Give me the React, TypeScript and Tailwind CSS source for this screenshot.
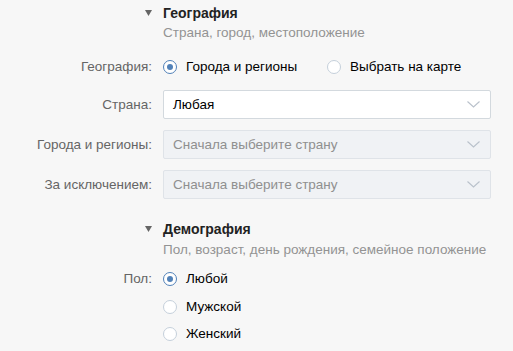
import React from "react";

const Tri = () => (
  <svg width="7" height="6" viewBox="0 0 7 6" className="block">
    <path d="M0 0 H7 L3.5 6 Z" fill="#656565" />
  </svg>
);

const Chevron = () => (
  <svg width="13" height="7" viewBox="0 0 13 7" className="block">
    <path d="M0.5 0.5 L6.5 6 L12.5 0.5" fill="none" stroke="#b9c1cb" strokeWidth="1.1" />
  </svg>
);

const Radio = ({ checked }: { checked?: boolean }) => (
  <span
    className={
      checked
        ? "flex h-[14px] w-[14px] shrink-0 items-center justify-center rounded-full border border-[#5181b8] bg-white"
        : "flex h-[14px] w-[14px] shrink-0 items-center justify-center rounded-full border border-[#c5d0db] bg-white"
    }
  >
    {checked && <span className="h-[6px] w-[6px] rounded-full bg-[#5181b8]" />}
  </span>
);

const Select = ({ text, disabled }: { text: string; disabled?: boolean }) => (
  <div
    className={
      disabled
        ? "flex h-[29px] w-[328px] items-center justify-between rounded-[2px] border border-[#dfe3e8] bg-[#f0f2f5] pl-[9px] pr-[10px] text-[#8f8f8f]"
        : "flex h-[29px] w-[328px] items-center justify-between rounded-[2px] border border-[#d3d9de] bg-white pl-[9px] pr-[10px] text-[#000]"
    }
  >
    <span>{text}</span>
    <Chevron />
  </div>
);

export default function App() {
  return (
    <div
      className="h-[351px] w-[513px] overflow-hidden bg-[#f7f7f7] text-[13.5px] leading-[16px]"
      style={{ fontFamily: '"Liberation Sans", Arial, sans-serif' }}
    >
      <div className="grid grid-cols-[152px_1fr] gap-x-[11px] pt-[4px]">
        {/* Geography header */}
        <div className="flex h-[18px] items-center justify-end">
          <Tri />
        </div>
        <div className="h-[18px] text-[14px] font-bold leading-[18px] text-[#222]">География</div>
        <div />
        <div className="mt-[3px] h-[16px] text-[#939393]">Страна, город, местоположение</div>

        {/* Geography radio row */}
        <div className="mt-[16px] flex h-[20px] items-center justify-end text-[#656565]">География:</div>
        <div className="mt-[16px] flex h-[20px] items-center text-[#000]">
          <div className="flex w-[164px] items-center gap-[9px]">
            <Radio checked />
            <span>Города и регионы</span>
          </div>
          <div className="flex items-center gap-[9px]">
            <Radio />
            <span>Выбрать на карте</span>
          </div>
        </div>

        <div className="mt-[13px] flex h-[29px] items-center justify-end text-[#656565]">Страна:</div>
        <div className="mt-[13px]">
          <Select text="Любая" />
        </div>

        <div className="mt-[11px] flex h-[29px] items-center justify-end text-[#656565]">Города и регионы:</div>
        <div className="mt-[11px]">
          <Select text="Сначала выберите страну" disabled />
        </div>

        <div className="mt-[11px] flex h-[29px] items-center justify-end text-[#656565]">За исключением:</div>
        <div className="mt-[11px]">
          <Select text="Сначала выберите страну" disabled />
        </div>

        {/* Demography header */}
        <div className="mt-[21px] flex h-[18px] items-center justify-end">
          <Tri />
        </div>
        <div className="mt-[21px] h-[18px] text-[14px] font-bold leading-[18px] text-[#222]">Демография</div>
        <div />
        <div className="mt-[4px] h-[16px] text-[#939393]">Пол, возраст, день рождения, семейное положение</div>

        {/* Gender */}
        <div className="mt-[7px] flex h-[28px] items-center justify-end text-[#656565]">Пол:</div>
        <div className="mt-[7px] flex flex-col text-[#000]">
          <div className="flex h-[28px] items-center gap-[9px]">
            <Radio checked />
            <span>Любой</span>
          </div>
          <div className="flex h-[27px] items-center gap-[9px]">
            <Radio />
            <span>Мужской</span>
          </div>
          <div className="flex h-[28px] items-center gap-[9px]">
            <Radio />
            <span>Женский</span>
          </div>
        </div>
      </div>
    </div>
  );
}
